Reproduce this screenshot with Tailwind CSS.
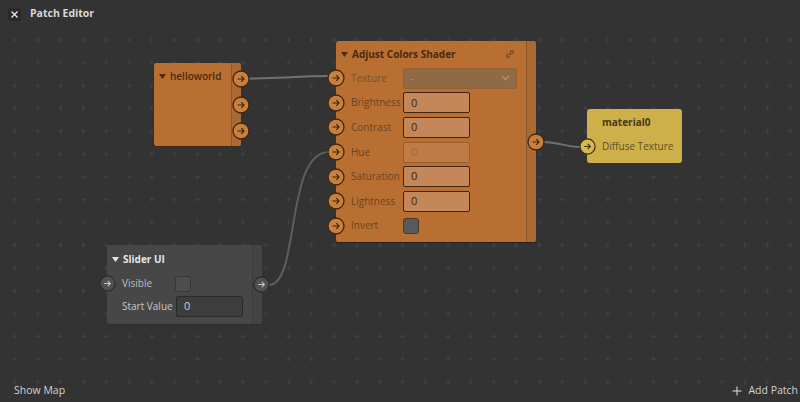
<!DOCTYPE html>
<html>
<head>
<meta charset="utf-8">
<title>Patch Editor</title>
<script src="https://cdn.jsdelivr.net/npm/@tailwindcss/browser@4"></script>
</head>
<body class="bg-[#333333]">
<main class="relative w-[800px] h-[402px] overflow-hidden bg-[#333333] text-[10px] font-['Open_Sans','Noto_Sans',sans-serif]">

  <!-- dot grid behind the canvas -->
  <svg class="absolute inset-0" width="800" height="402">
    <defs>
      <pattern id="grid" x="3.6" y="28.6" width="22.8" height="22.8" patternUnits="userSpaceOnUse">
        <path d="M9 11.4h4.8M11.4 9v4.8" stroke="#424242" stroke-width="1"/>
      </pattern>
    </defs>
    <rect width="800" height="402" fill="url(#grid)"/>
  </svg>

  <!-- top bar -->
  <header class="absolute left-0 top-0 w-full h-[28px] flex items-center pl-[8px] bg-[#333333]">
    <div class="w-[13px] h-[13px] flex items-center justify-center rounded-[2px] bg-[#2a2a2a]">
      <svg width="9" height="9" viewBox="0 0 9 9"><path d="M1.5 1.5l6 6M7.5 1.5l-6 6" stroke="#e8e8e8" stroke-width="1.3"/></svg>
    </div>
    <span class="ml-[9px] font-bold text-[#d8d8d8] text-[10.5px]">Patch Editor</span>
  </header>

  <!-- wires -->
  <svg class="absolute inset-0" width="800" height="402" fill="none">
    <path d="M248 78.5C285 78.5 295 76 329 76" stroke="#727272" stroke-width="2"/>
    <path d="M543 142C560 142 565 147 580 147" stroke="#727272" stroke-width="2"/>
    <path d="M269 285C300 285 285 152 329 152" stroke="#5e5e5e" stroke-width="2"/>
  </svg>

  <!-- helloworld -->
  <section class="absolute left-[153px] top-[63px] w-[88px] h-[84px] flex rounded-[3px] bg-[#b96f31] border-b border-l border-[#3f2a17]">
    <div class="flex-1 pl-[5px] pt-[5px] flex items-center h-[21px] gap-[4px] font-semibold text-[#4a2a10] text-[10px]">
      <svg width="7" height="5" viewBox="0 0 7 5"><path d="M0 0h7L3.5 5z" fill="#4a2a10"/></svg>
      <span>helloworld</span>
    </div>
    <div class="w-[10px] bg-[#a96a35] border-l border-[#8b5a30] rounded-r-[3px] flex flex-col items-start pt-[7px] gap-[8px]">
      <svg class="shrink-0" width="18" height="18" viewBox="0 0 18 18"><circle cx="9" cy="9" r="8" fill="#c9803f" stroke="#3f2510" stroke-width="1.3"/><path d="M5.5 9h6.5M9.3 6.2L12 9l-2.7 2.8" fill="none" stroke="#3f2510" stroke-width="1.2"/></svg>
      <svg class="shrink-0" width="18" height="18" viewBox="0 0 18 18"><circle cx="9" cy="9" r="8" fill="#c9803f" stroke="#3f2510" stroke-width="1.3"/><path d="M5.5 9h6.5M9.3 6.2L12 9l-2.7 2.8" fill="none" stroke="#3f2510" stroke-width="1.2"/></svg>
      <svg class="shrink-0" width="18" height="18" viewBox="0 0 18 18"><circle cx="9" cy="9" r="8" fill="#c9803f" stroke="#3f2510" stroke-width="1.3"/><path d="M5.5 9h6.5M9.3 6.2L12 9l-2.7 2.8" fill="none" stroke="#3f2510" stroke-width="1.2"/></svg>
    </div>
  </section>

  <!-- Adjust Colors Shader -->
  <section class="absolute left-[336px] top-[41px] w-[200px] h-[202px] flex rounded-[3px] bg-[#b96f31] border-b border-[#2c2018]">
    <div class="flex-1 flex flex-col">
      <div class="h-[24px] flex items-center pl-[5px] pr-[11px] gap-[4px] font-bold text-[#4a2a10] text-[10px] mt-[1px]">
        <svg width="7" height="5" viewBox="0 0 7 5"><path d="M0 0h7L3.5 5z" fill="#4a2a10"/></svg>
        <span class="flex-1">Adjust Colors Shader</span>
        <svg width="10" height="10" viewBox="0 0 10 10" fill="none" stroke="#6b4a2c" stroke-width="1.1"><path d="M4.2 5.8l2-2M3.4 4.6L2 6a1.4 1.4 0 002 2l1.4-1.4M6.6 5.4L8 4a1.4 1.4 0 00-2-2L4.6 3.4"/></svg>
      </div>
      <div class="h-[24.6px] flex items-center -ml-[9px] text-[#7a4f28]">
        <svg class="shrink-0" width="18" height="18" viewBox="0 0 18 18"><circle cx="9" cy="9" r="8" fill="#c9803f" stroke="#3f2510" stroke-width="1.3"/><path d="M5.5 9h6.5M9.3 6.2L12 9l-2.7 2.8" fill="none" stroke="#3f2510" stroke-width="1.2"/></svg>
        <span class="w-[58px] pl-[6px] shrink-0">Texture</span>
        <div class="w-[114px] h-[21px] flex items-center justify-between px-[6px] rounded-[2px] bg-[#8f6a47] border border-[#966232] text-[#b48b64]">
          <span>-</span>
          <svg width="9" height="6" viewBox="0 0 9 6" fill="none" stroke="#b48b64" stroke-width="1.6"><path d="M1 1l3.5 3.5L8 1"/></svg>
        </div>
      </div>
      <div class="h-[24.6px] flex items-center -ml-[9px] text-[#6a4520]">
        <svg class="shrink-0" width="18" height="18" viewBox="0 0 18 18"><circle cx="9" cy="9" r="8" fill="#c9803f" stroke="#3f2510" stroke-width="1.3"/><path d="M5.5 9h6.5M9.3 6.2L12 9l-2.7 2.8" fill="none" stroke="#3f2510" stroke-width="1.2"/></svg>
        <span class="w-[58px] pl-[6px] shrink-0">Brightness</span>
        <div class="w-[67px] h-[21px] flex items-center px-[7px] rounded-[2px] bg-[#c4875a] border border-[#3f2510] text-[11px] text-[#3a2410]">0</div>
      </div>
      <div class="h-[24.6px] flex items-center -ml-[9px] text-[#6a4520]">
        <svg class="shrink-0" width="18" height="18" viewBox="0 0 18 18"><circle cx="9" cy="9" r="8" fill="#c9803f" stroke="#3f2510" stroke-width="1.3"/><path d="M5.5 9h6.5M9.3 6.2L12 9l-2.7 2.8" fill="none" stroke="#3f2510" stroke-width="1.2"/></svg>
        <span class="w-[58px] pl-[6px] shrink-0">Contrast</span>
        <div class="w-[67px] h-[21px] flex items-center px-[7px] rounded-[2px] bg-[#c4875a] border border-[#3f2510] text-[11px] text-[#3a2410]">0</div>
      </div>
      <div class="h-[24.6px] flex items-center -ml-[9px] text-[#6a4520]">
        <svg class="shrink-0" width="18" height="18" viewBox="0 0 18 18"><circle cx="9" cy="9" r="8" fill="#c9803f" stroke="#3f2510" stroke-width="1.3"/><path d="M5.5 9h6.5M9.3 6.2L12 9l-2.7 2.8" fill="none" stroke="#3f2510" stroke-width="1.2"/></svg>
        <span class="w-[58px] pl-[6px] shrink-0">Hue</span>
        <div class="w-[67px] h-[21px] flex items-center px-[7px] rounded-[2px] bg-[#bf7b46] border border-[#9a5f2c] text-[11px] text-[#9c6b40]">0</div>
      </div>
      <div class="h-[24.6px] flex items-center -ml-[9px] text-[#6a4520]">
        <svg class="shrink-0" width="18" height="18" viewBox="0 0 18 18"><circle cx="9" cy="9" r="8" fill="#c9803f" stroke="#3f2510" stroke-width="1.3"/><path d="M5.5 9h6.5M9.3 6.2L12 9l-2.7 2.8" fill="none" stroke="#3f2510" stroke-width="1.2"/></svg>
        <span class="w-[58px] pl-[6px] shrink-0">Saturation</span>
        <div class="w-[67px] h-[21px] flex items-center px-[7px] rounded-[2px] bg-[#c4875a] border border-[#3f2510] text-[11px] text-[#3a2410]">0</div>
      </div>
      <div class="h-[24.6px] flex items-center -ml-[9px] text-[#6a4520]">
        <svg class="shrink-0" width="18" height="18" viewBox="0 0 18 18"><circle cx="9" cy="9" r="8" fill="#c9803f" stroke="#3f2510" stroke-width="1.3"/><path d="M5.5 9h6.5M9.3 6.2L12 9l-2.7 2.8" fill="none" stroke="#3f2510" stroke-width="1.2"/></svg>
        <span class="w-[58px] pl-[6px] shrink-0">Lightness</span>
        <div class="w-[67px] h-[21px] flex items-center px-[7px] rounded-[2px] bg-[#c4875a] border border-[#3f2510] text-[11px] text-[#3a2410]">0</div>
      </div>
      <div class="h-[24.6px] flex items-center -ml-[9px] text-[#6a4520]">
        <svg class="shrink-0" width="18" height="18" viewBox="0 0 18 18"><circle cx="9" cy="9" r="8" fill="#c9803f" stroke="#3f2510" stroke-width="1.3"/><path d="M5.5 9h6.5M9.3 6.2L12 9l-2.7 2.8" fill="none" stroke="#3f2510" stroke-width="1.2"/></svg>
        <span class="w-[58px] pl-[6px] shrink-0">Invert</span>
        <div class="w-[16px] h-[16px] rounded-[3px] bg-[#565a5e] border border-[#4a3a2c]"></div>
      </div>
    </div>
    <div class="w-[10px] bg-[#ab6a33] border-l border-[#8b5a30] rounded-r-[3px] flex flex-col items-start pt-[92px]">
      <svg class="shrink-0" width="18" height="18" viewBox="0 0 18 18"><circle cx="9" cy="9" r="8" fill="#c9803f" stroke="#3f2510" stroke-width="1.3"/><path d="M5.5 9h6.5M9.3 6.2L12 9l-2.7 2.8" fill="none" stroke="#3f2510" stroke-width="1.2"/></svg>
    </div>
  </section>

  <!-- material0 -->
  <section class="absolute left-[587px] top-[109px] w-[95px] h-[54px] flex flex-col rounded-[3px] bg-[#cdb04a]">
    <div class="h-[26px] pl-[15px] flex items-center font-bold text-[#453a18]">material0</div>
    <div class="h-[22px] flex items-center -ml-[8px] text-[#5e5022]">
      <svg class="shrink-0" width="17" height="17" viewBox="0 0 18 18"><circle cx="9" cy="9" r="8" fill="#d8b94e" stroke="#3a3012" stroke-width="1.3"/><path d="M5.5 9h6.5M9.3 6.2L12 9l-2.7 2.8" fill="none" stroke="#3a3012" stroke-width="1.2"/></svg>
      <span class="pl-[6px]">Diffuse Texture</span>
    </div>
  </section>

  <!-- Slider UI -->
  <section class="absolute left-[107px] top-[245px] w-[155px] h-[80px] flex rounded-[3px] bg-[#474747] border-b border-[#2e2e2e]">
    <div class="flex-1 flex flex-col">
      <div class="h-[28px] flex items-center pl-[5px] gap-[4px] font-bold text-[#e6e6e6]">
        <svg width="7" height="5" viewBox="0 0 7 5"><path d="M0 0h7L3.5 5z" fill="#e6e6e6"/></svg>
        <span>Slider UI</span>
      </div>
      <div class="h-[21px] flex items-center -ml-[8px] text-[#bdbdbd]">
        <svg class="shrink-0" width="17" height="17" viewBox="0 0 18 18"><circle cx="9" cy="9" r="8" fill="#505050" stroke="#2c2c2c" stroke-width="1.3"/><path d="M5.5 9h6.5M9.3 6.2L12 9l-2.7 2.8" fill="none" stroke="#c8c8c8" stroke-width="1.2"/></svg>
        <span class="w-[59px] pl-[6px] shrink-0">Visible</span>
        <div class="w-[16px] h-[16px] rounded-[3px] bg-[#4e4e4e] border border-[#363636]"></div>
      </div>
      <div class="h-[24px] flex items-center pl-[15px] text-[#c8c8c8]">
        <span class="w-[54px] shrink-0 whitespace-nowrap">Start Value</span>
        <div class="w-[67px] h-[21px] flex items-center px-[7px] rounded-[2px] bg-[#3d3d3d] border border-[#2b2b2b] text-[11px] text-[#cccccc]">0</div>
      </div>
    </div>
    <div class="w-[10px] bg-[#444444] border-l border-[#3a3a3a] rounded-r-[3px] flex flex-col items-start pt-[31px]">
      <svg class="shrink-0" width="17" height="17" viewBox="0 0 18 18"><circle cx="9" cy="9" r="8" fill="#505050" stroke="#2c2c2c" stroke-width="1.3"/><path d="M5.5 9h6.5M9.3 6.2L12 9l-2.7 2.8" fill="none" stroke="#c8c8c8" stroke-width="1.2"/></svg>
    </div>
  </section>

  <!-- bottom bar -->
  <footer class="absolute left-0 bottom-0 w-full h-[22px] flex items-center justify-between pl-[14px] pr-[2px] text-[10.5px] text-[#d2d2d2]">
    <span>Show Map</span>
    <div class="flex items-center gap-[6px]">
      <svg width="10" height="10" viewBox="0 0 10 10"><path d="M5 .5v9M.5 5h9" stroke="#e4e4e4" stroke-width="1"/></svg>
      <span>Add Patch</span>
    </div>
  </footer>
</main>
</body>
</html>
